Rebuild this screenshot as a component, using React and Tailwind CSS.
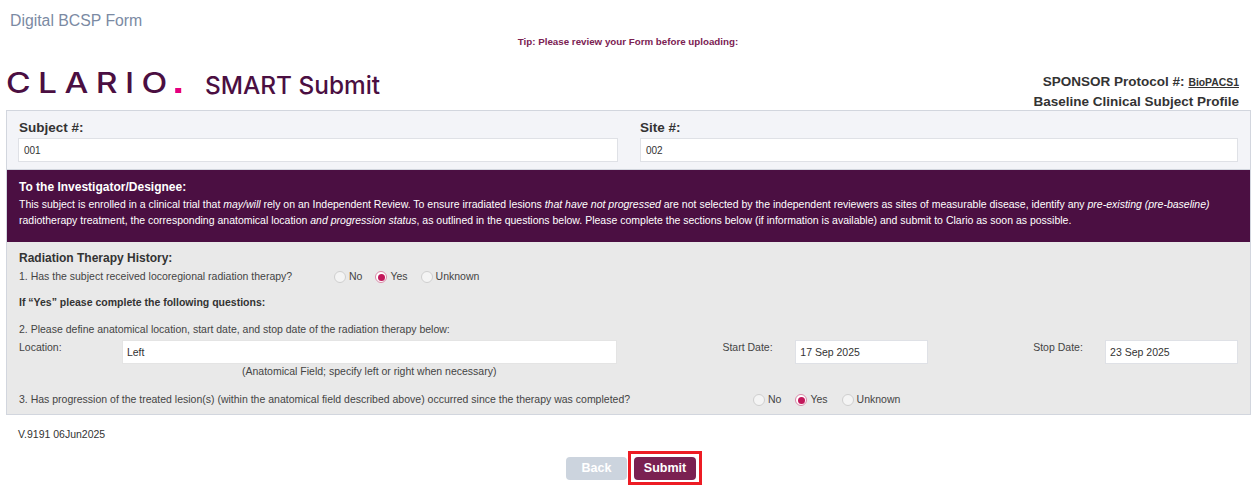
import React from "react";

function Radio({ label, checked }) {
  return (
    <span className="flex items-center gap-[3px]">
      <span className={`w-[12px] h-[12px] rounded-full border flex items-center justify-center ${checked ? "border-[#d98aa8] bg-white" : "border-[#cfcfcf] bg-[#f4f4f4]"}`}>
        {checked && <span className="w-[7px] h-[7px] rounded-full bg-[#c2185b]" />}
      </span>
      <span>{label}</span>
    </span>
  );
}

function Box({ value, className }) {
  return (
    <div className={`h-[24px] bg-white border border-[#dfe1e6] flex items-center text-[#333] ${className}`}>{value}</div>
  );
}

export default function App() {
  return (
    <div className="w-[1257px] h-[489px] bg-white overflow-hidden font-['Liberation_Sans',Arial,sans-serif] text-[#333]">
      <div className="pl-[10px] pt-[12px] h-[36px] text-[15.8px] leading-[18px] text-[#7b8aa3]">Digital BCSP Form</div>
      <div className="h-[12px] text-center text-[9.75px] leading-[12px] font-bold text-[#7b2152] pr-[1px]">Tip: Please review your Form before uploading:</div>

      <div className="mx-[7px] w-[1232px] h-[62px] flex justify-between">
        <div className="flex items-start pt-[19px]">
          <span className="block w-[198px] -ml-[1px] mr-[1px]">
            <span className="inline-block origin-left scale-x-[1.2] whitespace-nowrap text-[28px] leading-[32px] tracking-[6.2px] font-['Inter',sans-serif] font-medium text-[#4b0f42]">CLARIO<span className="inline-block w-[5px] h-[5px] bg-[#e5007d]" /></span>
          </span>
          <span className="mt-[2px] text-[24.4px] leading-[32px] font-['Inter',sans-serif] font-medium text-[#4b0f42]">SMART Submit</span>
        </div>
        <div className="text-right font-bold pt-[24px] text-[13.5px] leading-[20px] text-[#333]">
          <div className="h-[20px]">SPONSOR Protocol #: <span className="text-[10.4px] underline">BioPACS1</span></div>
          <div>Baseline Clinical Subject Profile</div>
        </div>
      </div>

      <div className="mx-[6px] w-[1245px] h-[305px] border border-[#d2d6de] flex flex-col">
        <div className="h-[59px] bg-[#f3f4f8] px-[11px] pt-[8px] flex gap-[22px] border-b border-[#d2d6de]">
          <div className="w-[600px]">
            <div className="pl-[1px] text-[13.5px] leading-[18px] font-bold">Subject #:</div>
            <Box value="001" className="text-[10px] mt-[1px] px-[5px]" />
          </div>
          <div className="w-[598px]">
            <div className="text-[13.5px] leading-[18px] font-bold">Site #:</div>
            <Box value="002" className="text-[10px] mt-[1px] px-[5px]" />
          </div>
        </div>

        <div className="h-[72px] bg-[#4b0f42] text-white px-[12px] pt-[9px] text-[10.5px] leading-[16px]">
          <div className="text-[12px] leading-[16px] font-bold">To the Investigator/Designee:</div>
          <p className="mt-[1px]">
            This subject is enrolled in a clinical trial that <i>may/will</i> rely on an Independent Review. To ensure irradiated lesions <i>that have not progressed</i> are not selected by the independent reviewers as sites of measurable disease, identify any <i>pre-existing (pre-baseline)</i> radiotherapy treatment, the corresponding anatomical location <i>and progression status</i>, as outlined in the questions below. Please complete the sections below (if information is available) and submit to Clario as soon as possible.
          </p>
        </div>

        <div className="flex-1 bg-[#e9e9e9] px-[12px] pt-[8px] text-[10.5px] text-[#444]">
          <div className="text-[12px] leading-[16px] font-bold text-[#333]">Radiation Therapy History:</div>
          <div className="mt-[2px] flex items-center h-[18px]">
            <span className="w-[315px]">1. Has the subject received locoregional radiation therapy?</span>
            <span className="flex gap-[13px]"><Radio label="No" /><Radio label="Yes" checked /><Radio label="Unknown" /></span>
          </div>
          <div className="mt-[7px] h-[18px] leading-[18px] font-bold text-[#333]">If “Yes” please complete the following questions:</div>
          <div className="mt-[9px] h-[18px] leading-[18px]">2. Please define anatomical location, start date, and stop date of the radiation therapy below:</div>
          <div className="mt-[2px] flex h-[24px]">
            <span className="w-[103px] leading-[14px]">Location:</span>
            <Box value="Left" className="w-[496px] px-[4px] pt-[1px] border-[#e4e4e4]" />
            <span className="ml-[105px] w-[73px] leading-[14px]">Start Date:</span>
            <Box value="17 Sep 2025" className="w-[133px] px-[4px] pt-[1px]" />
            <span className="ml-[105px] w-[72px] leading-[14px]">Stop Date:</span>
            <Box value="23 Sep 2025" className="w-[133px] px-[4px] pt-[1px]" />
          </div>
          <div className="h-[15px] leading-[15px] pl-[223px]">(Anatomical Field; specify left or right when necessary)</div>
          <div className="mt-[12px] flex items-center h-[18px]">
            <span className="w-[734px]">3. Has progression of the treated lesion(s) (within the anatomical field described above) occurred since the therapy was completed?</span>
            <span className="flex gap-[14px]"><Radio label="No" /><Radio label="Yes" checked /><Radio label="Unknown" /></span>
          </div>
        </div>
      </div>

      <div className="pl-[18px] mt-[11px] h-[16px] text-[10.5px] leading-[16px]">V.9191 06Jun2025</div>

      <div className="mt-[9px] pl-[566px] flex items-center gap-[1px]">
        <button className="w-[61px] h-[23px] rounded-[4px] bg-[#ccd4de] text-white text-[12.5px] font-bold">Back</button>
        <div className="w-[74px] h-[34px] border-[3px] border-[#ed1c24] bg-white flex items-center justify-center">
          <button className="block w-[62px] h-[23px] rounded-[4px] bg-[#7b2152] text-white text-[12.5px] font-bold">Submit</button>
        </div>
      </div>
    </div>
  );
}
